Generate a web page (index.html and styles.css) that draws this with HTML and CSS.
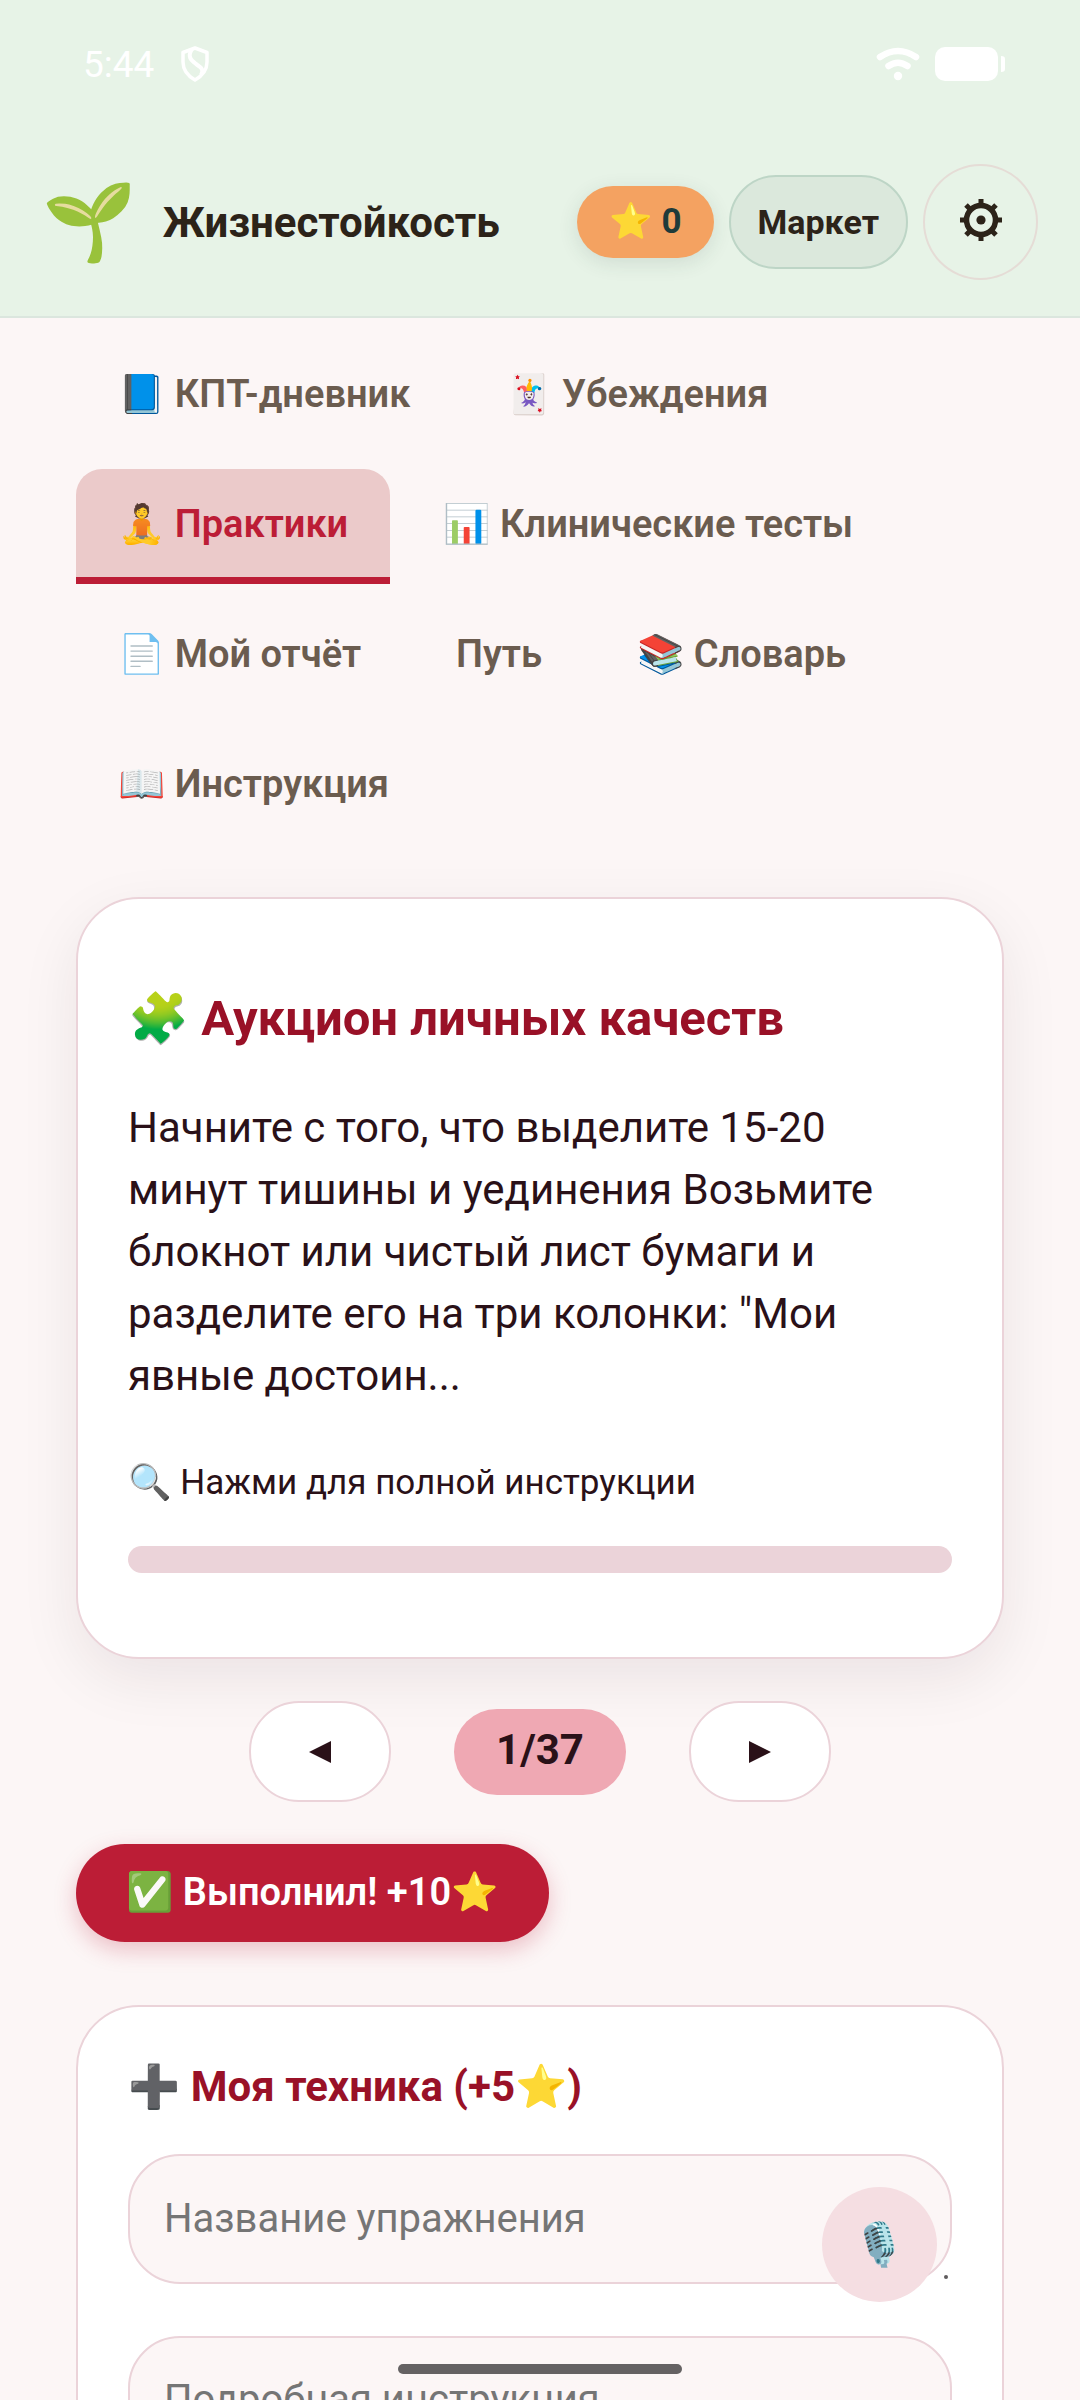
FILE: index.html
```html
<!DOCTYPE html>
<html lang="ru">
<head>
<meta charset="utf-8">
<meta name="viewport" content="width=device-width, initial-scale=1">
<title>Жизнестойкость</title>
<link rel="stylesheet" href="styles.css">
</head>
<body>
<div class="app">
  <header class="top">
    <div class="status">
      <time class="clock">5:44</time>
      <svg class="shield" viewBox="0 0 30 36" aria-hidden="true"><path d="M15 2 27 6.500V16C27 24 22 30 15 34 8 30 3 24 3 16V6.500Z" fill="none" stroke="currentColor" stroke-width="3.500" stroke-linejoin="round"/><path d="M12 3C7 11 11 14 16 18 22 22 24 24 21 29" fill="none" stroke="currentColor" stroke-width="4"/></svg>
      <svg class="wifi" viewBox="0 0 44 34" aria-hidden="true"><g fill="none" stroke="currentColor" stroke-width="6.500" stroke-linecap="round"><path d="M4 10Q22-2 40 10"/><path d="M12.500 19Q22 12.500 31.500 19"/></g><circle cx="22" cy="29" r="4.200" fill="currentColor"/></svg>
      <svg class="battery" viewBox="0 0 70 34" aria-hidden="true"><rect width="63" height="34" rx="10" fill="currentColor"/><path d="M66 9c3 0 4 1 4 3v10c0 2-1 3-4 3Z" fill="currentColor"/></svg>
    </div>
    <div class="brandbar">
      <span class="logo">🌱</span>
      <h1 class="brand">Жизнестойкость</h1>
      <div class="actions">
        <span class="stars">⭐ 0</span>
        <button class="market" type="button">Маркет</button>
        <button class="gear" type="button" aria-label="Настройки">
          <svg viewBox="0 0 42 42" aria-hidden="true"><circle cx="21" cy="21" r="14.500" fill="none" stroke="currentColor" stroke-width="5.500"/><circle cx="21" cy="21" r="4.600" fill="currentColor"/><path d="M21 0v6M21 36v6M0 21h6M36 21h6M6 6l4 4M32 32l4 4M36 6l-4 4M10 32l-4 4" stroke="currentColor" stroke-width="5"/></svg>
        </button>
      </div>
    </div>
  </header>
  <main class="content">
    <nav class="tabs">
      <button class="tab" type="button">📘 КПТ-дневник</button>
      <button class="tab" type="button">🃏 Убеждения</button>
      <button class="tab active" type="button">🧘 Практики</button>
      <button class="tab" type="button">📊 Клинические тесты</button>
      <button class="tab" type="button">📄 Мой отчёт</button>
      <button class="tab" type="button">Путь</button>
      <button class="tab" type="button">📚 Словарь</button>
      <button class="tab" type="button">📖 Инструкция</button>
    </nav>
    <article class="card practice">
      <h2 class="title">🧩 Аукцион личных качеств</h2>
      <p class="text">Начните с того, что выделите 15-20 минут тишины и уединения Возьмите блокнот или чистый лист бумаги и разделите его на три колонки: "Мои явные достоин...</p>
      <p class="hint">🔍 Нажми для полной инструкции</p>
      <div class="progress"></div>
    </article>
    <div class="pager">
      <button class="step" type="button" aria-label="Назад"><svg viewBox="0 0 24 24" aria-hidden="true"><path d="M23 1v22L1 12Z" fill="currentColor"/></svg></button>
      <span class="count">1/37</span>
      <button class="step" type="button" aria-label="Вперёд"><svg viewBox="0 0 24 24" aria-hidden="true"><path d="M1 1v22l22-11Z" fill="currentColor"/></svg></button>
    </div>
    <button class="done" type="button">✅ Выполнил! +10⭐</button>
    <form class="card own">
      <h3 class="subtitle">➕ Моя техника (+5⭐)</h3>
      <input class="field" type="text" placeholder="Название упражнения" aria-label="Название упражнения">
      <textarea class="field area" placeholder="Подробная инструкция" aria-label="Подробная инструкция"></textarea>
    </form>
  </main>
  <button class="mic" type="button" aria-label="Голосовой ввод">🎙️</button>
  <div class="homebar"></div>
</div>
</body>
</html>
```
FILE: styles.css
```css
* { box-sizing: border-box; }
body {
  margin: 0;
  background: #fcf6f6;
  color: #2a1118;
  font-family: Roboto, "Noto Color Emoji", sans-serif;
  font-size: 42px;
}
h1, h2, h3, p { margin: 0; }
button { font: inherit; color: inherit; border: 0; padding: 0; white-space: nowrap; }
svg { display: block; }

.app {
  position: relative;
  display: flex;
  flex-direction: column;
  height: 100vh;
  overflow: hidden;
}

.top {
  flex: none;
  background: #e7f3e7;
  border-bottom: 2px solid #dbe6de;
}
.status {
  display: flex;
  align-items: center;
  height: 128px;
  padding: 0 75px 0 83px;
  color: #fff;
}
.clock { font-size: 37px; }
.shield { width: 30px; height: 36px; margin-left: 26px; }
.wifi { width: 44px; height: 34px; margin-left: auto; }
.battery { width: 70px; height: 36px; margin-left: 15px; }

.brandbar {
  display: flex;
  align-items: center;
  padding: 36px 42px;
}
.logo { font-size: 76px; line-height: 80px; }
.brand {
  margin-left: 26px;
  color: #2c2319;
  font-size: 42px;
  font-weight: 700;
}
.actions {
  display: flex;
  align-items: center;
  gap: 15px;
  margin-left: auto;
}
.stars {
  padding: 14px 32px;
  border-radius: 36px;
  background: #f4a261;
  box-shadow: 0 5px 20px rgba(44, 62, 54, .12);
  color: #1f3b3a;
  font-size: 35px;
  font-weight: 700;
  line-height: 44px;
}
.market {
  height: 94px;
  padding: 0 27px;
  border: 2px solid #bdd5c6;
  border-radius: 47px;
  background: #dbe8dc;
  color: #2c2319;
  font-size: 34px;
  font-weight: 700;
}
.gear {
  display: grid;
  place-items: center;
  width: 115px;
  height: 116px;
  border: 2px solid #e5dcd6;
  border-radius: 50%;
  background: none;
  color: #2c2319;
}
.gear svg { width: 42px; height: 42px; margin-bottom: 4px; }

.content {
  flex: 1;
  min-height: 0;
  padding: 21px 76px 0;
}
.tabs {
  display: flex;
  flex-wrap: wrap;
  gap: 15px 11px;
}
.tab {
  height: 115px;
  padding: 2px 42px 0;
  border-bottom: 7px solid transparent;
  border-radius: 26px 26px 0 0;
  background: none;
  color: #6b5c4f;
  font-size: 38px;
  font-weight: 600;
}
.active {
  border-color: #bc1d36;
  background: #ebcaca;
  color: #bc1d36;
}

.card {
  padding: 50px;
  border: 2px solid #ebd3d9;
  border-radius: 63px;
  background: #fff;
}
.practice {
  margin-top: 53px;
  padding: 90px 50px 84px;
  box-shadow: 0 20px 60px rgba(42, 17, 24, .08);
}
.title, .subtitle { color: #991127; font-weight: 700; }
.title { font-size: 49px; line-height: 60px; }
.text { margin-top: 48px; line-height: 62px; }
.hint { margin-top: 51px; font-size: 35px; line-height: 50px; }
.progress {
  height: 27px;
  margin-top: 38px;
  border-radius: 14px;
  background: #ebd3d9;
}

.pager {
  display: flex;
  align-items: center;
  justify-content: center;
  gap: 63px;
  margin-top: 42px;
}
.step {
  display: grid;
  place-items: center;
  width: 142px;
  height: 101px;
  border: 2px solid #ebd3d9;
  border-radius: 50px;
  background: #fff;
}
.step svg { width: 24px; height: 24px; }
.count {
  padding: 16px 42px 20px;
  border-radius: 44px;
  background: #efa8b3;
  font-weight: 700;
  line-height: 50px;
}
.done {
  height: 98px;
  margin-top: 42px;
  padding: 0 50px 2px;
  border-radius: 49px;
  background: #bc1d36;
  box-shadow: 0 8px 22px rgba(188, 29, 54, .25);
  color: #fff;
  font-size: 38px;
  font-weight: 600;
}

.own { margin-top: 63px; }
.subtitle { font-size: 42px; line-height: 60px; }
.field {
  display: block;
  width: 100%;
  height: 130px;
  margin-top: 37px;
  padding: 0 34px 2px;
  border: 2px solid #ebd3d9;
  border-radius: 52px;
  background: #fcf6f6;
  color: inherit;
  font: inherit;
  font-size: 40px;
}
.field::placeholder { color: #757575; opacity: 1; }
.area {
  height: 260px;
  margin-top: 52px;
  padding-top: 38px;
  resize: none;
}

.mic {
  position: absolute;
  right: 143px;
  bottom: 98px;
  width: 115px;
  height: 115px;
  border-radius: 50%;
  background: #f5dee2;
  font-size: 42px;
}
.mic::after {
  content: "";
  position: absolute;
  right: -11px;
  bottom: 23px;
  width: 4px;
  height: 4px;
  border-radius: 2px;
  background: #5f5c5d;
}
.homebar {
  position: absolute;
  bottom: 26px;
  left: 50%;
  width: 284px;
  height: 10px;
  margin-left: -142px;
  border-radius: 5px;
  background: #656263;
}
```
